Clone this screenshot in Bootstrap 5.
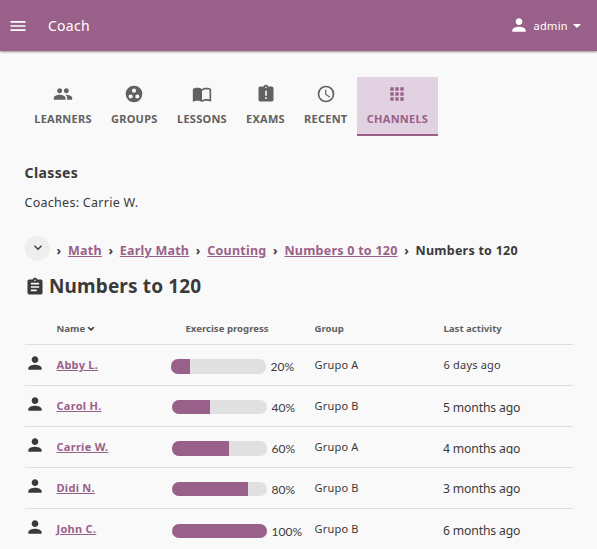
<!DOCTYPE html>
<html lang="en">
<head>
<meta charset="utf-8">
<meta name="viewport" content="width=device-width, initial-scale=1">
<title>Coach</title>
<link href="https://cdn.jsdelivr.net/npm/bootstrap@5.3.0/dist/css/bootstrap.min.css" rel="stylesheet">
<style>
:root{--plum:#996189;--ink:#3a3a3a}
body{font-family:"Noto Sans",sans-serif;background:#f9f9f9;color:var(--ink);font-size:12px;line-height:18px;overflow:hidden;height:549px}
svg{display:block;fill:currentColor;flex:none}
.appbar{height:51px;background:var(--plum);box-shadow:0 1px 2px rgba(0,0,0,.42);padding:0 16px 0 8px}
.appbar-title{font-size:14px;letter-spacing:.25px;margin-left:20px;margin-top:1px}
.appbar-user{font-size:11px;letter-spacing:.35px}
.appbar-user svg{margin-top:-2px;margin-right:4px}
.appbar svg{position:relative}
.caret{width:0;height:0;border:4px solid transparent;border-top-color:#fff;border-bottom:0;margin-left:5px}
.page{padding:26px 24px 0 25px}
.tabs{height:59px}
.tab{color:#616161;font-weight:700;font-size:11px;letter-spacing:.25px;padding-top:7px;height:59px;text-decoration:none}
.tab svg{margin-bottom:6px}
.tab-on{color:var(--plum);background:#e2d1e0;border-bottom:2px solid var(--plum)}
.w1{width:76px}.w2{width:66.500px}.w3{width:69px}.w4{width:58px}.w5{width:62.500px}.w6{width:81px}
.tab-on svg{margin-left:-1px}
.classes{font-size:14px;letter-spacing:.4px;line-height:20px;font-weight:700;margin:27px 0 0 -.5px}
.coaches{font-size:12.500px;letter-spacing:.28px;line-height:18px;margin:11px 0 0 -.5px}
.crumbs{height:26px;margin-top:23px;font-size:12.500px;letter-spacing:.24px;font-weight:700}
.crumb-btn{width:25px;height:25px;background:#eee;border:0;padding:0;color:var(--ink)}
.sep{width:18px;text-align:center;padding-top:6px}
.crumbs a,.learner{color:var(--plum);text-decoration:underline;text-decoration-thickness:1px;text-underline-offset:1px}
.crumb{padding-top:6px}
.topic{font-size:19px;letter-spacing:.14px;line-height:26px;font-weight:700;margin:12px 0 0;height:26px}
.topic svg{margin-top:2px}
.grid{display:grid;grid-template-columns:31.500px 115px 143px 129px 1fr;width:548px}
.head{height:46px;border-bottom:1px solid #dedede;font-size:9.600px;font-weight:700;color:#616161;padding-top:21px}
.head-progress{padding-left:14px}
.head svg{margin-top:3px;stroke:currentColor;stroke-width:1.500;color:var(--ink)}
.line{height:41px;border-bottom:1px solid #dedede;padding-top:11px;font-size:11px;letter-spacing:.2px}
.line:last-child{border:0}
.line>svg{margin:-3px 0 0 -.5px}
.learner{font-weight:700;font-size:11px;letter-spacing:.28px}
.meter{padding-top:3px}
.meter-first{margin-left:-1px}
.bar{width:95px;height:14px;border-radius:7px;background:#e0e0e0;flex:none}
.bar-tall{height:15px}
.bar .progress-bar{background:var(--plum)}
.pct{font-family:Lato,sans-serif;font-size:12px;letter-spacing:.05px;line-height:16px;margin-left:5px}
.ago{font-size:12.200px;letter-spacing:-.15px;line-height:18px;padding-top:2px;margin-left:-.5px;white-space:nowrap}
.ago-cut{height:16px;overflow:hidden}
.ago-up{padding-top:1px}
</style>
<script src="https://cdn.jsdelivr.net/npm/bootstrap@5.3.0/dist/js/bootstrap.bundle.min.js"></script>
</head>
<body>
<svg width="0" height="0" class="position-absolute"><defs>
<symbol id="person" viewBox="0 0 24 24"><path d="M12 12c2.210 0 4-1.790 4-4s-1.790-4-4-4-4 1.790-4 4 1.790 4 4 4zm0 2c-2.670 0-8 1.340-8 4v2h16v-2c0-2.660-5.330-4-8-4z"/></symbol>
<symbol id="chev" viewBox="0 0 24 24"><path d="M7.410 7.840L12 12.420l4.590-4.580L18 9.250l-6 6-6-6z"/></symbol>
</defs></svg>
<header class="appbar d-flex align-items-center text-white">
  <svg width="20" height="20" viewBox="0 0 24 24"><path d="M3 18h18v-2H3v2zm0-5h18v-2H3v2zm0-7v2h18V6H3z"/></svg>
  <span class="appbar-title">Coach</span>
  <div class="appbar-user ms-auto d-flex align-items-center"><svg width="20" height="20"><use href="#person"/></svg><span>admin</span><i class="caret"></i></div>
</header>
<main class="page">
  <nav class="tabs d-flex">
    <a class="tab w1 d-flex flex-column align-items-center"><svg width="20" height="20" viewBox="0 0 24 24"><path d="M16 11c1.660 0 2.990-1.340 2.990-3S17.660 5 16 5s-3 1.340-3 3 1.340 3 3 3zm-8 0c1.660 0 2.990-1.340 2.990-3S9.660 5 8 5 5 6.340 5 8s1.340 3 3 3zm0 2c-2.330 0-7 1.170-7 3.500V19h14v-2.500C15 14.170 10.330 13 8 13zm8 0c-.29 0-.62.02-.97.05C16.190 13.890 17 15.020 17 16.500V19h6v-2.500c0-2.330-4.670-3.500-7-3.500z"/></svg>LEARNERS</a>
    <a class="tab w2 d-flex flex-column align-items-center"><svg width="20" height="20" viewBox="0 0 24 24"><path fill-rule="evenodd" d="M12 2a10 10 0 1 0 0 20 10 10 0 0 0 0-20zM8 17.500a2.500 2.500 0 1 1 0-5 2.500 2.500 0 0 1 0 5zM9.500 8a2.500 2.500 0 1 1 5 0 2.500 2.500 0 0 1-5 0zm6.500 9.500a2.500 2.500 0 1 1 0-5 2.500 2.500 0 0 1 0 5z"/></svg>GROUPS</a>
    <a class="tab w3 d-flex flex-column align-items-center"><svg width="20" height="20" viewBox="0 0 24 24"><path d="M21 5c-1.110-.35-2.330-.5-3.500-.5-1.950 0-4.050.4-5.500 1.500-1.450-1.100-3.550-1.500-5.500-1.500S2.450 4.900 1 6v14.650c0 .25.25.5.5.5.1 0 .15-.05.25-.05C3.100 20.450 5.050 20 6.500 20c1.950 0 4.050.4 5.500 1.500 1.350-.85 3.800-1.500 5.500-1.500 1.650 0 3.350.3 4.750 1.050.1.050.15.050.25.050.25 0 .5-.25.5-.5V6c-.6-.45-1.250-.75-2-1zm0 13.500c-1.100-.35-2.300-.5-3.500-.5-1.700 0-4.150.65-5.500 1.500V8c1.350-.85 3.800-1.500 5.500-1.500 1.200 0 2.400.15 3.500.5v11.500z"/></svg>LESSONS</a>
    <a class="tab w4 d-flex flex-column align-items-center"><svg width="20" height="20" viewBox="0 0 24 24"><path d="M19 3h-4.180C14.400 1.840 13.300 1 12 1s-2.400.84-2.820 2H5c-1.100 0-2 .9-2 2v14c0 1.100.9 2 2 2h14c1.100 0 2-.9 2-2V5c0-1.100-.9-2-2-2zm-6 15h-2v-2h2v2zm0-4h-2V8h2v6zm-1-9c-.55 0-1-.45-1-1s.45-1 1-1 1 .45 1 1-.45 1-1 1z"/></svg>EXAMS</a>
    <a class="tab w5 d-flex flex-column align-items-center"><svg width="20" height="20" viewBox="0 0 24 24"><path fill-rule="evenodd" d="M12 2a10 10 0 1 0 0 20 10 10 0 0 0 0-20zm0 18a8 8 0 1 1 0-16 8 8 0 0 1 0 16z"/><path d="M12.500 7H11v6l5.250 3.150.75-1.230-4.500-2.670z"/></svg>RECENT</a>
    <a class="tab tab-on w6 d-flex flex-column align-items-center"><svg width="20" height="20" viewBox="0 0 24 24"><path d="M4 8h4V4H4v4zm6 12h4v-4h-4v4zm-6 0h4v-4H4v4zm0-6h4v-4H4v4zm6 0h4v-4h-4v4zm6-10v4h4V4h-4zm-6 4h4V4h-4v4zm6 6h4v-4h-4v4zm0 6h4v-4h-4v4z"/></svg>CHANNELS</a>
  </nav>
  <h2 class="classes">Classes</h2>
  <p class="coaches">Coaches: Carrie W.</p>
  <nav class="crumbs d-flex align-items-center text-nowrap">
    <button class="crumb-btn rounded-circle d-flex align-items-center justify-content-center" aria-label="More"><svg width="16" height="16"><use href="#chev"/></svg></button>
    <span class="sep">›</span><a class="crumb" href="#">Math</a><span class="sep">›</span><a class="crumb" href="#">Early Math</a><span class="sep">›</span><a class="crumb" href="#">Counting</a><span class="sep">›</span><a class="crumb" href="#">Numbers 0 to 120</a><span class="sep">›</span><span class="crumb">Numbers to 120</span>
  </nav>
  <h1 class="topic d-flex align-items-center"><svg width="20" height="20" viewBox="0 0 24 24" class="me-1"><path d="M19 3h-4.180C14.400 1.840 13.300 1 12 1s-2.400.84-2.820 2H5c-1.100 0-2 .9-2 2v14c0 1.100.9 2 2 2h14c1.100 0 2-.9 2-2V5c0-1.100-.9-2-2-2zm-7 0c.55 0 1 .45 1 1s-.45 1-1 1-1-.45-1-1 .45-1 1-1zm2 14H7v-2h7v2zm3-4H7v-2h10v2zm0-4H7V7h10v2z"/></svg>Numbers to 120</h1>
  <section>
    <div class="grid head"><span></span><span class="d-flex">Name<svg width="12" height="12"><use href="#chev"/></svg></span><span class="head-progress">Exercise progress</span><span>Group</span><span>Last activity</span></div>
    <div class="grid line"><svg width="20" height="20"><use href="#person"/></svg><div><a class="learner" href="#">Abby L.</a></div><div class="d-flex meter meter-first"><div class="progress bar bar-tall"><div class="progress-bar" style="width:20%"></div></div><span class="pct">20%</span></div><span>Grupo A</span><span>6 days ago</span></div>
    <div class="grid line"><svg width="20" height="20"><use href="#person"/></svg><div><a class="learner" href="#">Carol H.</a></div><div class="d-flex meter"><div class="progress bar"><div class="progress-bar" style="width:40%"></div></div><span class="pct">40%</span></div><span>Grupo B</span><span class="ago">5 months ago</span></div>
    <div class="grid line"><svg width="20" height="20"><use href="#person"/></svg><div><a class="learner" href="#">Carrie W.</a></div><div class="d-flex meter"><div class="progress bar bar-tall"><div class="progress-bar" style="width:60%"></div></div><span class="pct">60%</span></div><span>Grupo A</span><span class="ago ago-cut">4 months ago</span></div>
    <div class="grid line"><svg width="20" height="20"><use href="#person"/></svg><div><a class="learner" href="#">Didi N.</a></div><div class="d-flex meter"><div class="progress bar"><div class="progress-bar" style="width:80%"></div></div><span class="pct">80%</span></div><span>Grupo B</span><span class="ago ago-up">3 months ago</span></div>
    <div class="grid line"><svg width="20" height="20"><use href="#person"/></svg><div><a class="learner" href="#">John C.</a></div><div class="d-flex meter pt-1"><div class="progress bar"><div class="progress-bar" style="width:100%"></div></div><span class="pct">100%</span></div><span>Grupo B</span><span class="ago">6 months ago</span></div>
  </section>
</main>
</body>
</html>
